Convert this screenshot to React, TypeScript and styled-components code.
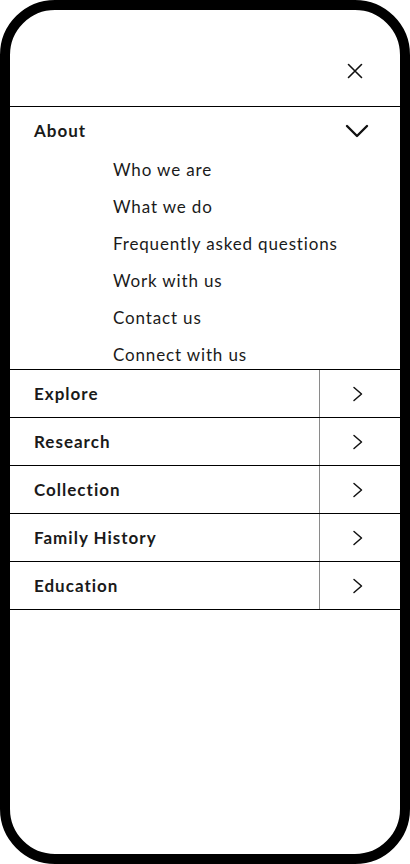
import React from "react";
import styled, { createGlobalStyle } from "styled-components";

const Global = createGlobalStyle`
  html, body { margin: 0; padding: 0; background: #fff; }
  body { font-family: "Lato", "Noto Sans", sans-serif; color: #1a1a1a; }
  * { box-sizing: border-box; }
`;

const Frame = styled.div`
  width: 410px;
  height: 864px;
  border: 10px solid #000;
  border-radius: 55px;
  overflow: hidden;
  background: #fff;
  display: flex;
  flex-direction: column;
`;

const Header = styled.header`
  height: 97px;
  border-bottom: 1px solid #000;
  display: flex;
  justify-content: flex-end;
  align-items: flex-end;
  padding: 0 31px 21px 0;
`;

const IconButton = styled.button`
  width: 28px;
  height: 28px;
  border: 0;
  background: none;
  padding: 0;
  display: flex;
  align-items: center;
  justify-content: center;
  color: #111;
`;

const Section = styled.section`
  border-bottom: 1px solid #000;
`;

const AboutRow = styled.div`
  height: 47px;
  display: flex;
  align-items: center;
  justify-content: space-between;
  padding: 0 31px 0 24px;
`;

const Label = styled.span`
  font-weight: 700;
  font-size: 17px;
  letter-spacing: 1px;
  color: #1a1a1a;
`;

const SubList = styled.ul`
  list-style: none;
  margin: 0;
  padding: 0 0 0 103px;
  display: flex;
  flex-direction: column;
  gap: 7px;
`;

const SubItem = styled.li`
  height: 30px;
  display: flex;
  align-items: center;
  font-size: 17px;
  letter-spacing: 0.85px;
  color: #1a1a1a;
`;

const NavRow = styled.div`
  height: 48px;
  border-bottom: 1px solid #000;
  display: flex;
  align-items: stretch;
`;

const NavLabel = styled.div`
  flex: 1;
  display: flex;
  align-items: center;
  padding-left: 24px;
`;

const ChevronCell = styled.div`
  width: 81px;
  border-left: 1px solid #8a8a8a;
  display: flex;
  align-items: center;
  justify-content: center;
  padding-right: 4px;
  color: #1a1a1a;
`;

const CloseIcon = () => (
  <svg width="16" height="16" viewBox="0 0 16 16" fill="none">
    <path d="M1.5 1.5 L14.5 14.5 M14.5 1.5 L1.5 14.5" stroke="#111" strokeWidth="1.6" strokeLinecap="round" />
  </svg>
);

const ChevronDown = () => (
  <svg width="24" height="14" viewBox="0 0 24 14" fill="none">
    <path d="M2 2 L12 12 L22 2" stroke="#111" strokeWidth="2.4" strokeLinecap="round" strokeLinejoin="round" />
  </svg>
);

const ChevronRight = () => (
  <svg width="12" height="16" viewBox="0 0 12 16" fill="none">
    <path d="M2 1.5 L9.5 8 L2 14.5" stroke="#111" strokeWidth="1.5" strokeLinecap="round" strokeLinejoin="round" />
  </svg>
);

const aboutItems = [
  "Who we are",
  "What we do",
  "Frequently asked questions",
  "Work with us",
  "Contact us",
  "Connect with us",
];

const navItems = ["Explore", "Research", "Collection", "Family History", "Education"];

export default function App() {
  return (
    <>
      <Global />
      <Frame>
        <Header>
          <IconButton aria-label="Close menu">
            <CloseIcon />
          </IconButton>
        </Header>
        <Section>
          <AboutRow>
            <Label>About</Label>
            <ChevronDown />
          </AboutRow>
          <SubList>
            {aboutItems.map((t) => (
              <SubItem key={t}>{t}</SubItem>
            ))}
          </SubList>
        </Section>
        {navItems.map((t) => (
          <NavRow key={t}>
            <NavLabel>
              <Label>{t}</Label>
            </NavLabel>
            <ChevronCell>
              <ChevronRight />
            </ChevronCell>
          </NavRow>
        ))}
      </Frame>
    </>
  );
}
